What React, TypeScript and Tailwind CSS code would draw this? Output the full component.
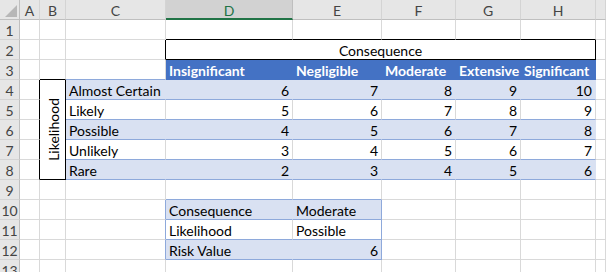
import React from 'react';
import clsx from 'clsx';

// worksheet palette
const GRID_R = 'border-r-[#d9d9d9]';
const GRID_B = 'border-b-[#d9d9d9]';
const BAND = 'bg-[#d9e1f2]';
const BAND_R = 'border-r-[#d9e1f2]';
const BLUE_R = 'border-r-[#8ea9db]';
const BLUE_B = 'border-b-[#8ea9db]';
const BLACK_R = 'border-r-black';
const BLACK_B = 'border-b-black';

const COLUMNS = ['A', 'B', 'C', 'D', 'E', 'F', 'G', 'H', ''];
const LEVELS = ['Insignificant', 'Negligible', 'Moderate', 'Extensive', 'Significant'];
const MATRIX: [string, number[]][] = [
  ['Almost Certain', [6, 7, 8, 9, 10]],
  ['Likely', [5, 6, 7, 8, 9]],
  ['Possible', [4, 5, 6, 7, 8]],
  ['Unlikely', [3, 4, 5, 6, 7]],
  ['Rare', [2, 3, 4, 5, 6]],
];

type CellProps = {
  children?: React.ReactNode;
  className?: string;
  r?: string;
  b?: string;
  align?: 'left' | 'right' | 'center';
};

function Cell({ children, className = 'bg-white', r = GRID_R, b = GRID_B, align = 'left' }: CellProps) {
  return (
    <div
      className={clsx(
        'flex items-center border-r border-b px-[3px] pt-[3px] whitespace-nowrap text-[14px] leading-none text-black',
        className,
        r,
        b,
        align === 'right' && 'justify-end',
        align === 'center' && 'justify-center'
      )}
    >
      {children}
    </div>
  );
}

function RowHead({ n }: { n: number }) {
  return (
    <div className="flex items-center justify-center border-r border-b border-r-[#bfbfbf] border-b-[#d4d4d4] bg-[#e6e6e6] pt-[2px] text-[14px] leading-none text-[#444]">
      {n}
    </div>
  );
}

function ColumnHeaders() {
  return (
    <>
      <div className="relative border-r border-b border-r-[#bfbfbf] border-b-[#bfbfbf] bg-[#e6e6e6]">
        <svg className="absolute inset-0" width="19" height="19" viewBox="0 0 19 19">
          <polygon points="17,5 17,17 5,17" fill="#b7b7b7" />
        </svg>
      </div>
      {COLUMNS.map((c, i) =>
        c === 'D' ? (
          <div
            key={i}
            className="flex items-center justify-center border-r border-b-2 border-r-[#bfbfbf] border-b-[#217346] bg-[#d2d2d2] pt-[3px] text-[14px] leading-none text-[#217346]"
          >
            {c}
          </div>
        ) : (
          <div
            key={i}
            className="flex items-center justify-center border-r border-b border-r-[#d4d4d4] border-b-[#bfbfbf] bg-[#e6e6e6] pt-[2px] text-[14px] leading-none text-[#444]"
          >
            {c}
          </div>
        )
      )}
    </>
  );
}

export default function App() {
  return (
    <div className="h-[272px] w-[606px] overflow-hidden bg-white font-['Lato',sans-serif]">
      <div className="grid grid-cols-[20px_20px_26px_100px_127px_89px_74px_65px_75px_1fr] grid-rows-[repeat(14,20px)]">
        <ColumnHeaders />

        {/* row 1 */}
        <RowHead n={1} />
        <Cell />
        <Cell />
        <Cell />
        <Cell b={BLACK_B} />
        <Cell b={BLACK_B} />
        <Cell b={BLACK_B} />
        <Cell b={BLACK_B} />
        <Cell b={BLACK_B} />
        <Cell />

        {/* row 2: merged title */}
        <RowHead n={2} />
        <Cell />
        <Cell />
        <Cell r={BLACK_R} />
        <div className="col-span-5 flex items-center justify-center border-r border-b border-r-black border-b-black bg-white pt-[3px] text-[14px] leading-none text-black">
          Consequence
        </div>
        <Cell />

        {/* row 3: table header */}
        <RowHead n={3} />
        <Cell />
        <Cell b={BLACK_B} />
        <Cell b={BLUE_B} />
        {LEVELS.map((l) => (
          <Cell key={l} className="bg-[#4472c4] font-bold text-white" r="border-r-[#4472c4]" b="border-b-[#4472c4]">
            {l}
          </Cell>
        ))}
        <Cell />

        {/* rows 4-8: matrix */}
        {MATRIX.map(([label, values], i) => {
          const band = i % 2 === 0;
          return (
            <React.Fragment key={label}>
              <RowHead n={4 + i} />
              <Cell r={BLACK_R} />
              {i === 0 && (
                <div className="row-span-5 flex items-center justify-center border-r border-b border-r-black border-b-black bg-white pl-[2px]">
                  <span className="rotate-180 text-[14px] leading-none text-black [writing-mode:vertical-rl]">
                    Likelihood
                  </span>
                </div>
              )}
              <Cell className={band ? BAND : 'bg-white'} r={band ? BAND_R : GRID_R} b={BLUE_B}>
                {label}
              </Cell>
              {values.map((v, j) => (
                <Cell key={j} className={band ? BAND : 'bg-white'} r={band ? BAND_R : GRID_R} b={BLUE_B} align="right">
                  {v}
                </Cell>
              ))}
              <Cell />
            </React.Fragment>
          );
        })}

        {/* row 9 */}
        <RowHead n={9} />
        <Cell />
        <Cell />
        <Cell />
        <Cell b={BLUE_B} />
        <Cell b={BLUE_B} />
        <Cell />
        <Cell />
        <Cell />
        <Cell />

        {/* rows 10-12: lookup */}
        <RowHead n={10} />
        <Cell />
        <Cell />
        <Cell r={BLUE_R} />
        <Cell className={BAND} r={BAND_R} b={BLUE_B}>
          Consequence
        </Cell>
        <Cell className={BAND} r={BLUE_R} b={BLUE_B}>
          Moderate
        </Cell>
        <Cell />
        <Cell />
        <Cell />
        <Cell />

        <RowHead n={11} />
        <Cell />
        <Cell />
        <Cell r={BLUE_R} />
        <Cell b={BLUE_B}>Likelihood</Cell>
        <Cell r={BLUE_R} b={BLUE_B}>
          Possible
        </Cell>
        <Cell />
        <Cell />
        <Cell />
        <Cell />

        <RowHead n={12} />
        <Cell />
        <Cell />
        <Cell r={BLUE_R} />
        <Cell className={BAND} r={BAND_R} b={BLUE_B}>
          Risk Value
        </Cell>
        <Cell className={BAND} r={BLUE_R} b={BLUE_B} align="right">
          6
        </Cell>
        <Cell />
        <Cell />
        <Cell />
        <Cell />

        {/* row 13 */}
        <RowHead n={13} />
        {COLUMNS.map((c, i) => (
          <Cell key={i} />
        ))}
      </div>
    </div>
  );
}
